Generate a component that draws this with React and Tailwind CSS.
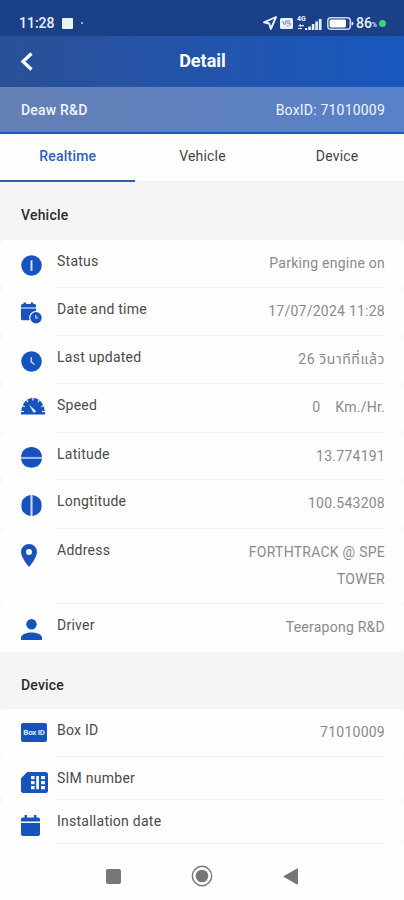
import React from 'react';

const InfoIcon = () => (
  <svg width="21" height="21" viewBox="0 0 21 21">
    <circle cx="10.5" cy="10.5" r="10.3" fill="#1653bd" />
    <path d="M10.5 5.4v10.4" stroke="#dce8fa" strokeWidth="1.9" />
  </svg>
);

const DateTimeIcon = () => (
  <svg width="22" height="22" viewBox="0 0 22 22">
    <path d="M0 3.5Q0 2 1.500 2H2.500V.4h2.600V2h4.600V.4h2.600V2h1.200Q15 2 15 3.500V5.400H0zM0 6.500h15v2.600a6.500 6.500 0 0 0-6.300 9.100H1.500Q0 18.200 0 16.700z" fill="#1653bd" />
    <circle cx="15" cy="15.800" r="5.700" fill="#1653bd" />
    <path d="M14.800 13v3h2.600" stroke="#c9daf5" strokeWidth="1.200" fill="none" />
  </svg>
);

const ClockIcon = () => (
  <svg width="21" height="21" viewBox="0 0 21 21">
    <circle cx="10.500" cy="10.500" r="10.300" fill="#1653bd" />
    <path d="M10.300 6.300v4.700l3.200 2.500" stroke="#c9daf5" strokeWidth="1.500" fill="none" />
  </svg>
);

const SpeedIcon = () => (
  <svg width="24" height="17" viewBox="0 0 24 17">
    <path d="M0 16.500C0 7 4.500 0 12 0s12 7 12 16.500z" fill="#1653bd" />
    <path d="M12 0v2.600M5.500 1.600l1.500 2.600M18.500 1.600l-1.500 2.600M.8 7.300l2.900 1.500M23.200 7.300l-2.900 1.500M0 13.500h3M24 13.500h-3" stroke="#fefefe" strokeWidth="1.100" />
    <path d="M8 6.800l5.800 4.900a1.500 1.500 0 1 1-2 1.700z" fill="#dce8fa" />
  </svg>
);

const LatitudeIcon = () => (
  <svg width="21" height="21" viewBox="0 0 21 21">
    <path d="M0 9.900A10.400 10.400 0 0 1 4.500 1.800l1.500-.9Q10.500-.8 15 .9l1.500.9A10.400 10.400 0 0 1 21 9.900zM0 11.500h21q-.4 4.600-4.300 7.800-6.200 2.700-12.400 0Q.4 16.100 0 11.500z" fill="#1653bd" />
    <path d="M0 10.700h21" stroke="#a3bde9" strokeWidth="1.600" />
  </svg>
);

const LongitudeIcon = () => (
  <svg width="21" height="21" viewBox="0 0 21 21">
    <path d="M9.700 0Q5.400.4 1.700 4.500q-2.700 6 0 12Q5.400 20.600 9.700 21zM11.300 0q4.300.4 8 4.500 2.700 6 0 12-3.700 4.100-8 4.500z" fill="#1653bd" />
    <path d="M10.500 .5v20" stroke="#c9daf5" strokeWidth="1.600" />
  </svg>
);

const PinIcon = () => (
  <svg width="16" height="23" viewBox="0 0 16 23">
    <path fillRule="evenodd" d="M8 0a8 8 0 0 1 8 8c0 5.800-8 15-8 15S0 13.800 0 8a8 8 0 0 1 8-8zm0 5a3 3 0 1 0 0 6 3 3 0 0 0 0-6z" fill="#1653bd" />
  </svg>
);

const DriverIcon = () => (
  <svg width="21" height="21" viewBox="0 0 21 21">
    <circle cx="10.500" cy="5.300" r="5.200" fill="#1653bd" />
    <path d="M0 21v-2.400c0-3.400 6-5.200 10.500-5.200S21 15.200 21 18.600V21z" fill="#1653bd" />
  </svg>
);

const BoxIcon = () => (
  <div className="flex h-[19px] w-[26px] items-center justify-center rounded-[2px] bg-[#1653bd] text-[8px] font-bold tracking-[-0.3px] whitespace-nowrap text-[#dce8fa]">
    Box ID
  </div>
);

const SimIcon = () => (
  <svg width="27" height="21" viewBox="0 0 27 21">
    <path d="M6.200 0h18.300Q27 0 27 2.500v16Q27 21 24.500 21h-22Q0 21 0 18.500V6.200z" fill="#1653bd" />
    <path d="M10 4h3.600v3.200H10zM10 9h3.600v3.200H10zM10 14h3.600v3.200H10zM15.200 4h2.800v13.200h-2.800zM20 4h4v3.200h-4zM20 9h4v3.200h-4zM20 14h4v3.200h-4z" fill="#f2f6fd" />
  </svg>
);

const CalendarIcon = () => (
  <svg width="19" height="21" viewBox="0 0 19 21">
    <path d="M0 4.200q0-1.800 1.800-1.800h1.800V0H6v2.400h7V0h2.400v2.400h1.800q1.800 0 1.800 1.800v2.400H0zM0 8h19v11q0 2-2 2H2q-2 0-2-2z" fill="#1653bd" />
  </svg>
);

const vehicleRows = [
  { label: 'Status', value: 'Parking engine on', icon: <InfoIcon />, height: 'h-12', iconTop: 'pt-[15px]' },
  { label: 'Date and time', value: '17/07/2024 11:28', icon: <DateTimeIcon />, height: 'h-12', iconTop: 'pt-[14px]' },
  { label: 'Last updated', value: '26 วินาทีที่แล้ว', icon: <ClockIcon />, height: 'h-12', iconTop: 'pt-[15px]', valueClass: 'tracking-[0.6px]' },
  { label: 'Speed', value: '0\u00a0\u00a0\u00a0\u00a0Km./Hr.', icon: <SpeedIcon />, height: 'h-[49px]', iconTop: 'pt-[14px]' },
  { label: 'Latitude', value: '13.774191', icon: <LatitudeIcon />, height: 'h-[47px]', iconTop: 'pt-[14px]' },
  { label: 'Longtitude', value: '100.543208', icon: <LongitudeIcon />, height: 'h-[49px]', iconTop: 'pt-[15px]' },
  { label: 'Address', value: 'FORTHTRACK @ SPE TOWER', icon: <PinIcon />, height: 'h-[75px]', iconTop: 'pt-[15px]' },
  { label: 'Driver', value: 'Teerapong R&D', icon: <DriverIcon />, height: 'h-12', iconTop: 'pt-[15px]', last: true },
];

const deviceRows = [
  { label: 'Box ID', value: '71010009', icon: <BoxIcon />, height: 'h-12', iconTop: 'pt-[14px]' },
  { label: 'SIM number', value: '', icon: <SimIcon />, height: 'h-[43px]', iconTop: 'pt-[15px]' },
  { label: 'Installation date', value: '', icon: <CalendarIcon />, height: 'h-11', iconTop: 'pt-[15px]' },
];

const Section = ({ title, rows, className }) => (
  <section className="bg-[#fafafa]">
    <h2 className={`${className} flex items-center bg-[#f5f5f5] px-[21px] pt-2 text-sm font-medium tracking-[0.2px] text-[#2c2c2c]`}>
      {title}
    </h2>
    {rows.map((row) => (
      <div key={row.label} className={`${row.height} flex rounded-md bg-[#fefefe] pr-[19px] pl-[21px]`}>
        <div className={`${row.iconTop} w-9 shrink-0`}>{row.icon}</div>
        <div className={`flex flex-1 justify-between ${row.last ? '' : 'border-b border-[#eeeeee]'}`}>
          <span className="pt-[11px] text-sm leading-5 tracking-[0.25px] text-[#4a4a4a]">{row.label}</span>
          <span className={`w-[150px] pt-[10px] text-right text-sm leading-[27px] text-[#8a8a8a] ${row.valueClass || 'tracking-[0.25px]'}`}>
            {row.value}
          </span>
        </div>
      </div>
    ))}
  </section>
);

const StatusBar = () => (
  <div className="flex h-9 items-center bg-[#1a4088] pt-[10px] pr-[18px] pl-[19px] text-[#eaf0fa]">
    <span className="text-sm font-medium">11:28</span>
    <span className="ml-[7px] h-[11px] w-[11px] rounded-[1px] bg-[#edf3fb]" />
    <span className="ml-2 h-[2px] w-[2px] rounded-full bg-[#b9c9e6]" />
    <svg className="ml-auto" width="14" height="14" viewBox="0 0 14 14" fill="none" stroke="currentColor" strokeWidth="1.900" strokeLinejoin="round">
      <path d="M13 1L1 6.300l5.200 1.200L7.800 13z" />
    </svg>
    <svg className="ml-[3px]" width="13" height="11" viewBox="0 0 13 11">
      <rect width="13" height="11" rx="1.500" fill="#eaf0fa" />
      <path d="M2.500 3l2 4 1.500-4h4M6.500 5h3.500v3M6.500 8h2" stroke="#6d88b8" fill="none" />
    </svg>
    <div className="ml-1 flex items-end">
      <div className="-mr-[9px] w-[10px] self-start text-[7px] leading-[5px] font-bold">4G</div>
      <svg width="25" height="13" viewBox="0 0 25 13" fill="currentColor">
        <path d="M0 8.500l3-1.500v1h3v1.200H3v1zM7 11h2.300v2H7zM10.300 9.500h2.600V13h-2.600zM13.800 7h2.600v6h-2.600zM17.300 4.500h2.600V13h-2.600zM20.800 2h2.800v11h-2.800z" />
        <path d="M0 11h4v1H0z" />
      </svg>
    </div>
    <svg className="ml-[4px]" width="27" height="13" viewBox="0 0 27 13">
      <rect x=".8" y=".8" width="22.500" height="11.400" rx="3" fill="none" stroke="#c9d6ec" strokeWidth="1.500" />
      <rect x="2.500" y="2.500" width="16.500" height="8" rx="1.500" fill="#fff" />
      <path d="M24.500 4.500q2 0 2 2t-2 2z" fill="#dae4f4" />
    </svg>
    <span className="ml-[2px] text-sm font-medium">86</span>
    <span className="mt-1 text-[7px] font-medium">%</span>
    <span className="ml-[2px] h-[7px] w-[7px] rounded-full bg-[#3ed36b]" />
  </div>
);

const App = () => {
  return (
    <div className="flex h-[900px] w-[404px] flex-col overflow-hidden bg-[#fefefe] font-['Roboto','Noto_Sans_Thai',sans-serif]">
      <StatusBar />

      <header className="grid h-[51px] grid-cols-3 items-center bg-linear-to-r from-[#2a5097] to-[#1757be] px-5 pb-px text-white">
        <svg width="14" height="19" viewBox="0 0 14 19" fill="none" stroke="currentColor" strokeWidth="3.300">
          <path d="M11.500 1.500L3 9.500l8.500 8" />
        </svg>
        <h1 className="pl-px text-center text-lg font-bold">Detail</h1>
      </header>

      <div className="flex h-[47px] items-center justify-between border-b-2 border-[#1b5ab8] bg-linear-to-r from-[#6480b4] to-[#5881c9] pr-[19px] pl-[21px] text-sm tracking-[0.2px] text-[#f0f5fc]">
        <span className="font-medium">Deaw R&D</span>
        <span>BoxID: 71010009</span>
      </div>

      <nav className="grid h-12 grid-cols-3 text-center text-sm leading-5 tracking-[0.2px]">
        <div className="border-b-2 border-[#2f60b4] pt-3 pl-px font-medium text-[#2c60b9]">Realtime</div>
        <div className="border-b border-[#f2f2f2] pt-3 pl-px text-[#444]">Vehicle</div>
        <div className="border-b border-[#f2f2f2] pt-3 pl-px text-[#444]">Device</div>
      </nav>

      <Section title="Vehicle" rows={vehicleRows} className="h-[58px]" />
      <Section title="Device" rows={deviceRows} className="h-[57px]" />

      <div className="flex flex-1 items-center justify-center gap-[70px] pt-2 text-[#777]">
        <svg width="15" height="15" viewBox="0 0 15 15" fill="currentColor">
          <rect width="15" height="15" rx="2" />
        </svg>
        <svg width="22" height="22" viewBox="0 0 22 22" fill="currentColor">
          <circle cx="11" cy="11" r="9.700" fill="none" stroke="currentColor" strokeWidth="1.400" />
          <circle cx="11" cy="11" r="6.300" />
        </svg>
        <svg width="15" height="17" viewBox="0 0 15 17" fill="currentColor">
          <path d="M0 8.500L14 .5q1-.3 1 .7v14.600q0 1-1 .7z" />
        </svg>
      </div>
    </div>
  );
};

export default App;
